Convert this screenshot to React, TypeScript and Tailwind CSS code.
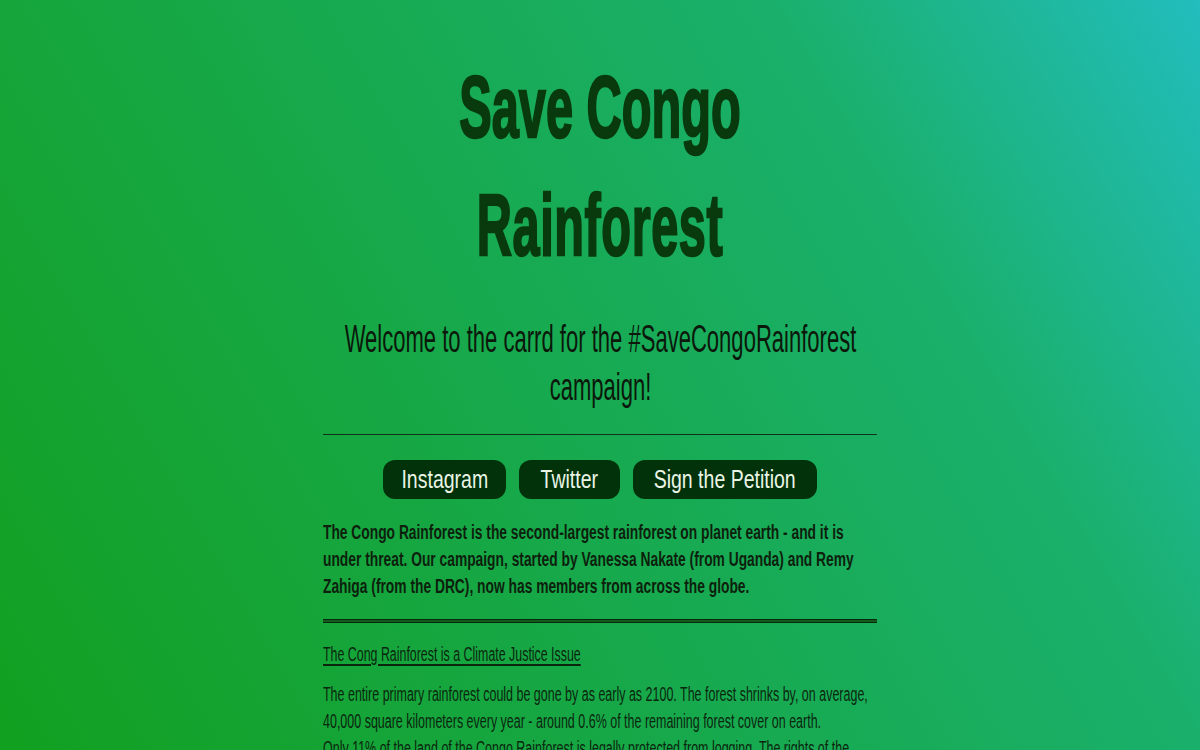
export default function App() {
  return (
    <div className="h-screen overflow-hidden bg-[linear-gradient(60deg,#12a020_0%,#15a53a_26%,#1ab06c_74%,#22bdbd_100%)] font-['Liberation_Sans',Arial,sans-serif]">
      <div className="mx-auto flex w-[554px] flex-col items-center pt-[48px]">
        {/* Title */}
        <h1 className="w-full scale-x-[0.56] text-center text-[87px] font-bold leading-[118px] text-[#093a0e] [-webkit-text-stroke:2.5px_#093a0e]">
          Save Congo
          <br />
          <span className="tracking-[1px]">Rainforest</span>
        </h1>

        {/* Intro */}
        <p className="mt-[31px] w-[955px] shrink-0 scale-x-[0.58] text-center text-[38px] leading-[48px] text-[#0b180b]">
          Welcome to the carrd for the #SaveCongoRainforest campaign!
        </p>

        <hr className="mt-[23px] w-full border-t border-[#12301a]" />

        {/* Links */}
        <div className="mt-[25px] flex gap-[13px]">
          <LinkBtn label="Instagram" width="w-[123px]" />
          <LinkBtn label="Twitter" width="w-[101px]" />
          <LinkBtn label="Sign the Petition" width="w-[184px]" />
        </div>

        <div className="mt-[20px] w-full">
          <p className="origin-left scale-x-[0.69] whitespace-nowrap text-[20px] font-bold leading-[27px] text-[#0d1f0d]">
            The Congo Rainforest is the second-largest rainforest on planet earth - and it is
            <br />
            under threat. Our campaign, started by Vanessa Nakate (from Uganda) and Remy
            <br />
            Zahiga (from the DRC), now has members from across the globe.
          </p>
        </div>

        <div className="mt-[19px] h-[4px] w-full border-y border-[#082a0c] bg-[#155a1d]" />

        <div className="mt-[18px] w-full">
          <h2 className="inline-block origin-left scale-x-[0.62] whitespace-nowrap text-[20px] leading-[27px] text-[#0b260e] underline underline-offset-[3px]">
            The Cong Rainforest is a Climate Justice Issue
          </h2>
        </div>

        <div className="mt-[13px] w-full">
          <p className="origin-left scale-x-[0.64] whitespace-nowrap text-[19.5px] leading-[27px] text-[#0b260e]">
            The entire primary rainforest could be gone by as early as 2100. The forest shrinks by, on average,
            <br />
            40,000 square kilometers every year - around 0.6% of the remaining forest cover on earth.
            <br />
            Only 11% of the land of the Congo Rainforest is legally protected from logging. The rights of the
          </p>
        </div>
      </div>
    </div>
  );
}

function LinkBtn({ label, width }: { label: string; width: string }) {
  return (
    <a
      href="#"
      className={`${width} flex h-[39px] items-center justify-center rounded-[12px] bg-[#02320a] text-[#eaf5e6]`}
    >
      <span className="shrink-0 scale-x-[0.75] whitespace-nowrap text-[26px]">{label}</span>
    </a>
  );
}
